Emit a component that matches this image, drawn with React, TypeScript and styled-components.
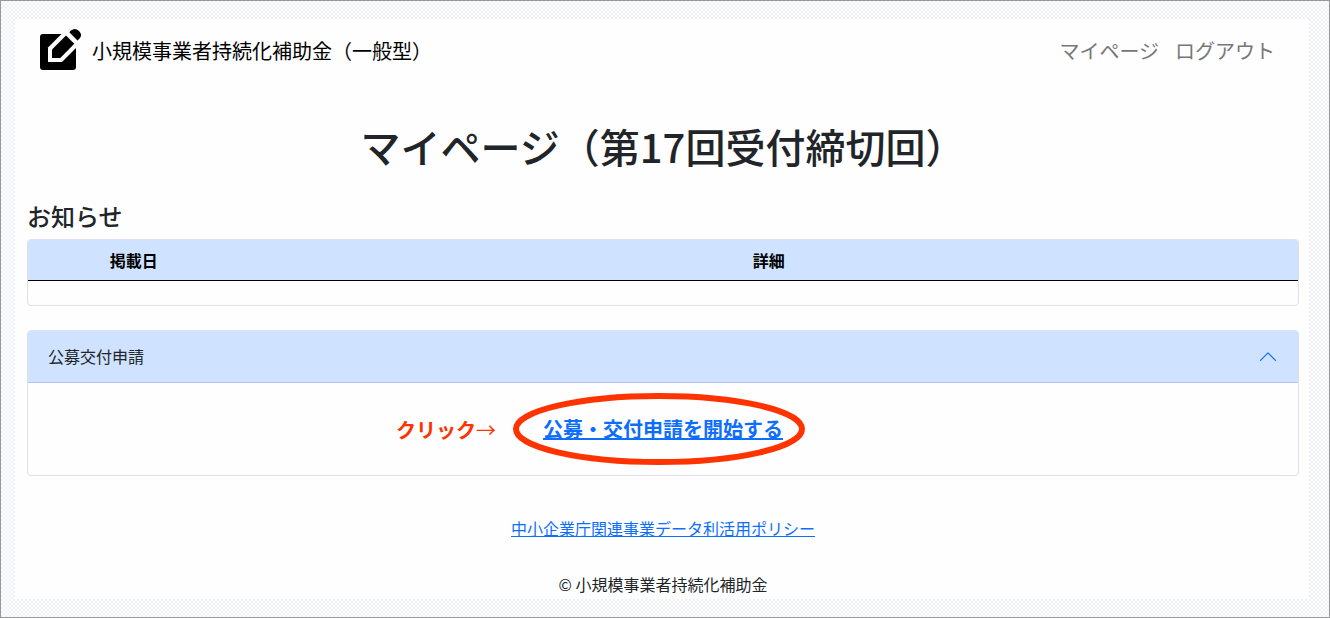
import React from "react";
import styled, { createGlobalStyle } from "styled-components";

const GlobalStyle = createGlobalStyle`
  *, *::before, *::after { box-sizing: border-box; }
  body {
    margin: 0;
    background: #fff;
    color: #212529;
    font-family: "Noto Sans CJK JP", "Noto Sans", sans-serif;
    font-size: 16px;
    line-height: 24px;
  }
`;

const Frame = styled.div`
  min-height: 100vh;
  padding: 18px 20px 18px 14px;
  border: 1px solid #999;
  background: repeating-conic-gradient(#efeff7 0% 25%, #fff 0% 50%) 0 0 / 4px 4px;
`;

const Panel = styled.div`
  padding: 0 10px 0 12px;
  background: #fefefe;
`;

const Header = styled.header`
  display: flex;
  align-items: center;
  justify-content: space-between;
  height: 64px;
  padding: 0 24px 0 13px;
`;

const Brand = styled.a`
  display: flex;
  align-items: center;
  gap: 10px;
  color: #000;
  font-size: 20px;
  line-height: 30px;
  text-decoration: none;
`;

const Nav = styled.nav`
  display: flex;
  gap: 16px;
`;

const NavLink = styled.a`
  color: #777;
  font-size: 20px;
  line-height: 30px;
  text-decoration: none;
`;

const PageTitle = styled.h1`
  margin: 39px 0 0;
  font-size: 40px;
  font-weight: 500;
  line-height: 48px;
  text-align: center;
`;

const SectionTitle = styled.h2`
  margin: 32px 0 9px;
  font-size: 24px;
  font-weight: 500;
  line-height: 28px;
`;

const TableBox = styled.div`
  overflow: hidden;
  border: 1px solid #dee2e6;
  border-radius: 4px;
`;

const Table = styled.table`
  width: 100%;
  border-collapse: separate;
  border-spacing: 0;
  table-layout: fixed;
`;

const HeadCell = styled.th<{ $width?: string }>`
  width: ${(p) => p.$width ?? "auto"};
  height: 41px;
  padding: 8px;
  border-bottom: 1px solid #000;
  background: #cfe2ff;
  color: #000;
  font-weight: 700;
`;

const EmptyCell = styled.td`
  height: 24px;
  padding: 0;
`;

const Accordion = styled.section`
  margin-top: 24px;
  overflow: hidden;
  border: 1px solid #dee2e6;
  border-radius: 4px;
`;

const AccordionButton = styled.button`
  display: flex;
  align-items: center;
  justify-content: space-between;
  width: 100%;
  height: 52px;
  padding: 0 20px 2px;
  border: 0;
  border-bottom: 1px solid #b1c6ea;
  background: #cfe2ff;
  color: #212529;
  font: inherit;
  text-align: left;
`;

const AccordionBody = styled.div`
  display: flex;
  justify-content: center;
  padding: 31px 20px;
`;

const Action = styled.div`
  position: relative;
  font-size: 20px;
  line-height: 30px;
`;

const StartLink = styled.a`
  color: #0d6efd;
  font-weight: 700;
`;

const Hint = styled.span`
  position: absolute;
  top: 1px;
  right: 100%;
  margin-right: 47px;
  color: #ff3300;
  white-space: nowrap;
`;

const Ring = styled.svg`
  position: absolute;
  top: -21px;
  left: -30px;
  pointer-events: none;
`;

const Footer = styled.footer`
  display: flex;
  flex-direction: column;
  align-items: center;
  gap: 32px;
  padding: 40px 0 3px;
`;

const PolicyLink = styled.a`
  color: #0d6efd;
`;

const PencilIcon = () => (
  <svg width="42" height="46" viewBox="0 0 42 46" aria-hidden="true">
    <rect x="0" y="6" width="36" height="36" rx="3" />
    <path d="M8 34V19.5L27 0.5L41 15L22 34Z" fill="#fefefe" />
    <path d="M12 30V21.5L26 7.5L34.3 15.8L20.3 30Z" />
    <path d="M29.3 4.2L31 2.5Q35 -0.8 39 3Q43 7 39.5 10.5L37.5 12.5Z" />
  </svg>
);

const ChevronUp = () => (
  <svg width="20" height="20" viewBox="0 0 16 16" fill="none" stroke="#0d6efd" aria-hidden="true">
    <path d="M2 11.5L8 5.5L14 11.5" strokeLinecap="round" strokeLinejoin="round" />
  </svg>
);

export default function App() {
  const [open, setOpen] = React.useState(true);
  return (
    <>
      <GlobalStyle />
      <Frame>
        <Panel>
          <Header>
            <Brand href="#home">
              <PencilIcon />
              小規模事業者持続化補助金（一般型）
            </Brand>
            <Nav>
              <NavLink href="#mypage">マイページ</NavLink>
              <NavLink href="#logout">ログアウト</NavLink>
            </Nav>
          </Header>
          <main>
            <PageTitle>マイページ（第17回受付締切回）</PageTitle>
            <SectionTitle>お知らせ</SectionTitle>
            <TableBox>
              <Table>
                <thead>
                  <tr>
                    <HeadCell scope="col" $width="16.6667%">掲載日</HeadCell>
                    <HeadCell scope="col">詳細</HeadCell>
                  </tr>
                </thead>
                <tbody>
                  <tr>
                    <EmptyCell colSpan={2} />
                  </tr>
                </tbody>
              </Table>
            </TableBox>
            <Accordion>
              <AccordionButton
                type="button"
                aria-expanded={open}
                aria-controls="application"
                onClick={() => setOpen(!open)}
              >
                公募交付申請
                <ChevronUp />
              </AccordionButton>
              {open && (
                <AccordionBody id="application">
                  <Action>
                    <Hint><b>クリック</b>→</Hint>
                    <StartLink href="#start">公募・交付申請を開始する</StartLink>
                    <Ring width="292" height="72" viewBox="0 0 292 72" aria-hidden="true">
                      <ellipse cx="146" cy="36" rx="143" ry="33" fill="none" stroke="#ff3300" strokeWidth="6" />
                    </Ring>
                  </Action>
                </AccordionBody>
              )}
            </Accordion>
          </main>
          <Footer>
            <PolicyLink href="#policy">中小企業庁関連事業データ利活用ポリシー</PolicyLink>
            <span>© 小規模事業者持続化補助金</span>
          </Footer>
        </Panel>
      </Frame>
    </>
  );
}
